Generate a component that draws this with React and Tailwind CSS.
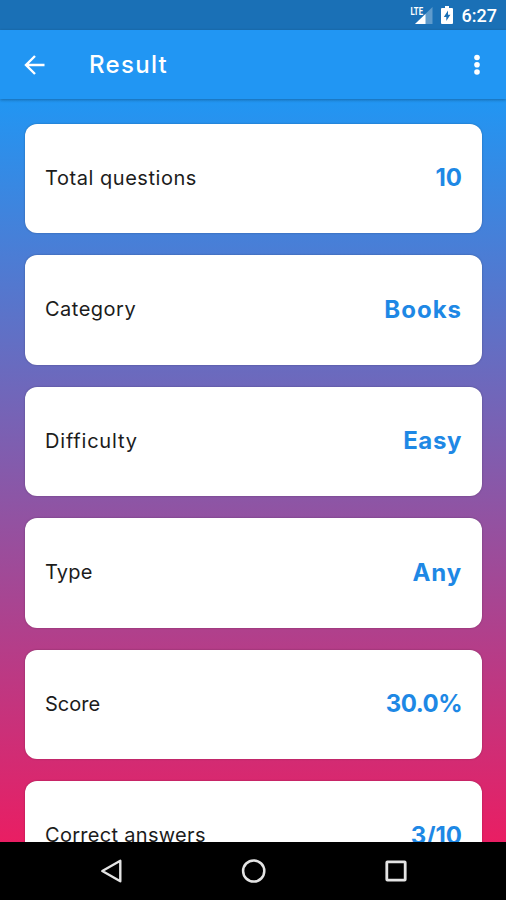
import React from 'react';

const results = [
  { label: 'Total questions', value: '10', labelClass: 'tracking-[0.55px]', valueClass: 'tracking-[0px]' },
  { label: 'Category', value: 'Books', labelClass: 'tracking-[0.5px]', valueClass: 'tracking-[1px]' },
  { label: 'Difficulty', value: 'Easy', labelClass: 'tracking-[0.8px]', valueClass: 'tracking-[0.6px]' },
  { label: 'Type', value: 'Any', labelClass: 'tracking-[0.2px]', valueClass: 'tracking-[0.9px]' },
  { label: 'Score', value: '30.0%', labelClass: 'tracking-[0px]', valueClass: 'tracking-[-0.5px]' },
  { label: 'Correct answers', value: '3/10', labelClass: 'tracking-[0.3px]', valueClass: 'tracking-[0px]' },
];

function StatusBar() {
  return (
    <div className="flex h-[30px] shrink-0 items-center justify-end bg-[#1a70b6] pr-[9px] text-white">
      <svg width="24" height="20" viewBox="0 0 24 20" className="mr-[7px]">
        <path d="M22.5 2v17H5z" fill="#fff" opacity="0.3" />
        <path d="M15.5 9v10H5z" fill="#fff" />
        <text x="0.5" y="9.5" fontFamily="Roboto" fontWeight="700" fontSize="11" textLength="12.5" lengthAdjust="spacingAndGlyphs" fill="#fff">LTE</text>
      </svg>
      <svg width="12" height="20" viewBox="0 0 12 20" className="mr-[9px]">
        <path d="M4 1h4v2h3a1 1 0 0 1 1 1v14a1 1 0 0 1-1 1H1a1 1 0 0 1-1-1V4a1 1 0 0 1 1-1h3z" fill="#fff" />
        <path d="M7 5.5 2.8 12H5.3v4L9.4 9.8H7z" fill="#1a70b6" />
      </svg>
      <span className="pt-px font-[Roboto] text-[18px] leading-none font-medium">6:27</span>
    </div>
  );
}

function AppBar() {
  return (
    <div className="z-10 flex h-[69px] shrink-0 items-center bg-[#2196f3] pr-[25px] pl-[24px] text-white shadow-[0_1px_3px_rgba(0,0,0,0.3)]">
      <svg width="21" height="20" viewBox="0 0 21 20" fill="none" stroke="#fff" strokeWidth="2.4">
        <path d="M20.5 10H2M11 1 2 10l9 9" />
      </svg>
      <h1 className="ml-[44px] text-[24px] leading-none font-medium tracking-[1.3px]">Result</h1>
      <svg width="8" height="22" viewBox="0 0 8 22" fill="#fff" className="ml-auto">
        <circle cx="4" cy="3.5" r="2.8" />
        <circle cx="4" cy="10.8" r="2.8" />
        <circle cx="4" cy="18" r="2.8" />
      </svg>
    </div>
  );
}

function ResultCard({ item }) {
  return (
    <div className="flex h-[109.5px] shrink-0 items-center justify-between rounded-[12px] bg-white px-5 pb-px shadow-[0_0_2px_rgba(0,0,0,0.3)]">
      <span className={`text-[20px] leading-none text-[#1c1c1c] ${item.labelClass}`}>{item.label}</span>
      <span className={`pt-px text-[24px] leading-none font-bold text-[#1e88e5] ${item.valueClass}`}>{item.value}</span>
    </div>
  );
}

function NavBar() {
  return (
    <div className="flex h-[58px] shrink-0 items-center justify-between bg-black pr-[99px] pl-[100px]">
      <svg width="22" height="24" viewBox="0 0 22 24" fill="none" stroke="#e4e4e4" strokeWidth="2.4" strokeLinejoin="round">
        <path d="M20.3 1.8v20.4L2.3 12z" />
      </svg>
      <svg width="26" height="26" viewBox="0 0 26 26" fill="none" stroke="#e4e4e4" strokeWidth="2.5">
        <circle cx="12.7" cy="13" r="10.6" />
      </svg>
      <svg width="22" height="22" viewBox="0 0 22 22" fill="none" stroke="#e4e4e4" strokeWidth="2.8">
        <rect x="1.8" y="1.8" width="18.4" height="18.4" rx="0.6" />
      </svg>
    </div>
  );
}

export default function App() {
  return (
    <div className="flex h-[900px] w-[506px] flex-col overflow-hidden font-[Inter,sans-serif]">
      <StatusBar />
      <AppBar />
      <main className="flex min-h-0 flex-1 flex-col gap-[22px] overflow-hidden bg-linear-to-b/srgb from-[#2196f3] to-[#e91e63] pt-[24.5px] pr-[24px] pl-[25px]">
        {results.map((item) => (
          <ResultCard key={item.label} item={item} />
        ))}
      </main>
      <NavBar />
    </div>
  );
}
